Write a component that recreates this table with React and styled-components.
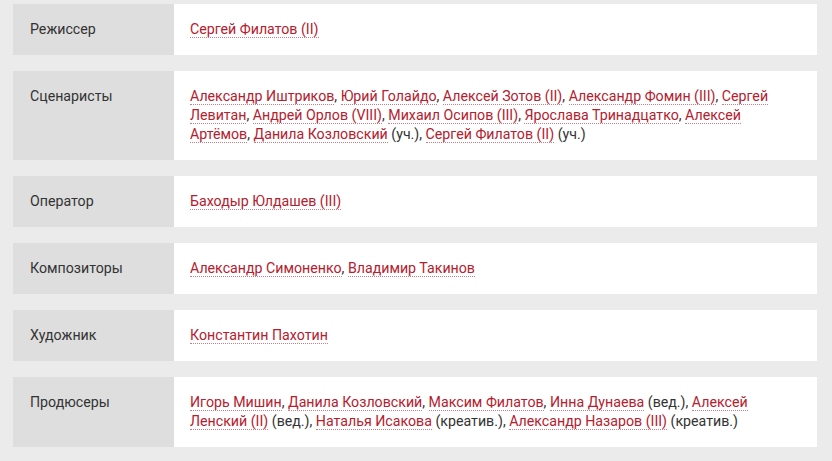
import React from "react";
import styled, { createGlobalStyle } from "styled-components";

const Global = createGlobalStyle`
  html, body { margin: 0; padding: 0; background: #ebebeb; }
  body { font-family: Roboto, "Noto Sans", sans-serif; }
`;

const Page = styled.div`
  padding: 4px 15px 0 13px;
  display: flex;
  flex-direction: column;
  gap: 16px;
`;

const Row = styled.div`
  display: grid;
  grid-template-columns: 161px 1fr;
`;

const Label = styled.div`
  background: #dedede;
  color: #333;
  font-size: 14.2px;
  line-height: 19px;
  padding: 16px 10px 16px 17px;
`;

const Value = styled.div`
  background: #fff;
  color: #333;
  font-size: 14.2px;
  line-height: 19px;
  padding: 16px 40px 16px 16px;
`;

const Person = styled.a`
  color: #b5202e;
  text-decoration: none;
  border-bottom: 1px dotted #d27a82;
`;

const data = [
  ["Режиссер", [["Сергей Филатов (II)"]]],
  [
    "Сценаристы",
    [
      ["Александр Иштриков"],
      ["Юрий Голайдо"],
      ["Алексей Зотов (II)"],
      ["Александр Фомин (III)"],
      ["Сергей Левитан"],
      ["Андрей Орлов (VIII)"],
      ["Михаил Осипов (III)"],
      ["Ярослава Тринадцатко"],
      ["Алексей Артёмов"],
      ["Данила Козловский", "уч."],
      ["Сергей Филатов (II)", "уч."],
    ],
  ],
  ["Оператор", [["Баходыр Юлдашев (III)"]]],
  ["Композиторы", [["Александр Симоненко"], ["Владимир Такинов"]]],
  ["Художник", [["Константин Пахотин"]]],
  [
    "Продюсеры",
    [
      ["Игорь Мишин"],
      ["Данила Козловский"],
      ["Максим Филатов"],
      ["Инна Дунаева", "вед."],
      ["Алексей Ленский (II)", "вед."],
      ["Наталья Исакова", "креатив."],
      ["Александр Назаров (III)", "креатив."],
    ],
  ],
];

export default function App() {
  return (
    <>
      <Global />
      <Page>
        {data.map(([label, people]) => (
          <Row key={label}>
            <Label>{label}</Label>
            <Value>
              {people.map(([name, note], i) => (
                <React.Fragment key={i}>
                  <Person href="#">{name}</Person>
                  {note ? ` (${note})` : ""}
                  {i < people.length - 1 ? ", " : ""}
                </React.Fragment>
              ))}
            </Value>
          </Row>
        ))}
      </Page>
    </>
  );
}
